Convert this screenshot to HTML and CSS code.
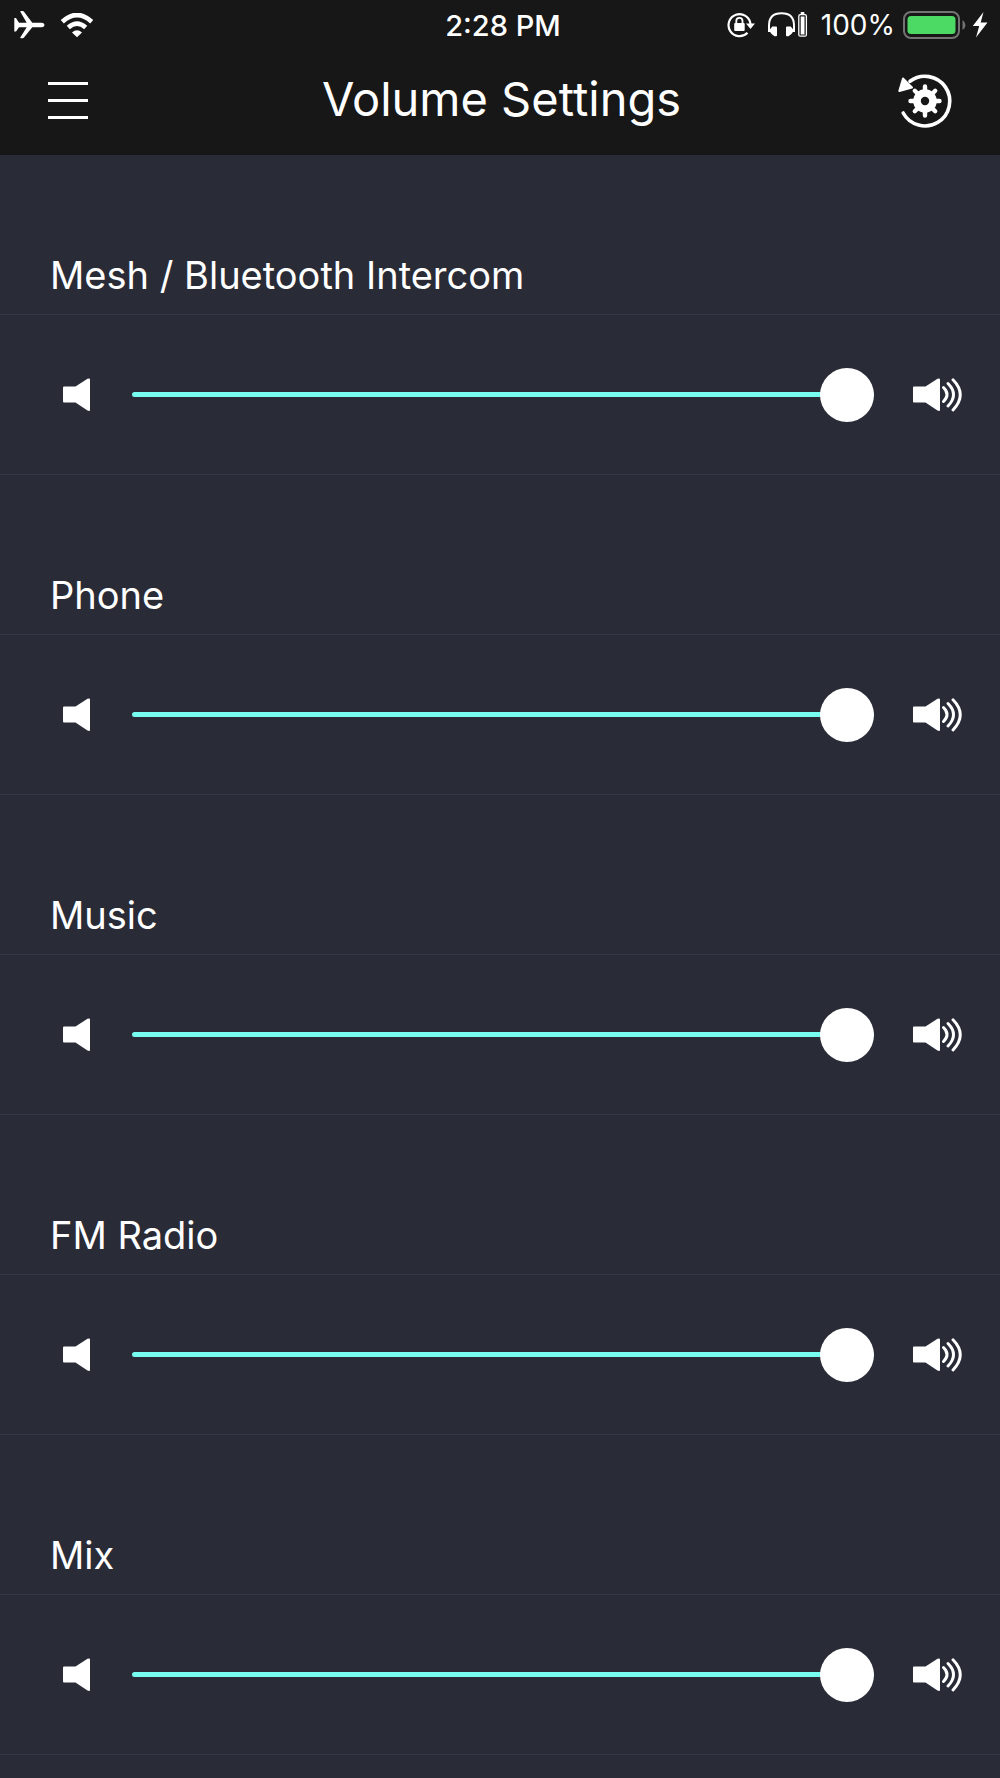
FILE: index.html
```html
<!DOCTYPE html>
<html lang="en">
<head>
    <meta charset="UTF-8">
    <meta name="viewport" content="width=device-width, initial-scale=1.0">
    <title>Volume Settings</title>
    <link rel="stylesheet" href="styles.css">
</head>
<body>

    <!-- shared speaker icons -->
    <svg class="sprite" aria-hidden="true">
        <symbol id="speaker-low" viewBox="0 0 30 34">
            <path d="M1 8.500H12.500L24.500 .8Q27 0 27 1.500V32Q27 33.500 24.500 32.500L12.500 24.500H1Q0 24.500 0 23.500V9.500Q0 8.500 1 8.500Z" fill="#fff"/>
        </symbol>
        <symbol id="speaker-high" viewBox="0 0 49 34">
            <path d="M1 8.500H12.500L24.500 .8Q27 0 27 1.500V32Q27 33.500 24.500 32.500L12.500 24.500H1Q0 24.500 0 23.500V9.500Q0 8.500 1 8.500Z" fill="#fff"/>
            <path d="M30.500 9.500Q37.500 16.500 30.500 23.500M35 5.500Q46 16.500 35 28M40 1.700Q54.500 16.500 40 32" fill="none" stroke="#fff" stroke-width="2.900" stroke-linecap="round"/>
        </symbol>
    </svg>

    <header class="header">
        <div class="status-bar">
            <div class="status-left">
                <svg width="32" height="28" viewBox="0 0 32 28" aria-label="Airplane mode">
                    <path d="M.3 7H2L5 11.700H12.700L6.300 .8Q6 0 7 0H8.700Q9.500 0 10 .7L18.300 11.700H28Q30.500 11.900 30.500 14T28 16.200H18.300L10 26.600Q9.500 27.200 8.700 27.200H7Q6 27.200 6.300 26.400L12.700 16.200H5L2 20.500H.3Z" fill="#fff"/>
                </svg>
                <svg width="34" height="25" viewBox="0 0 34 25" aria-label="Wi-Fi">
                    <path d="M2.300 8.700Q17-4.700 31.700 8.700M8.300 14.500Q17 6.700 25.700 14.500" fill="none" stroke="#fff" stroke-width="4.600"/>
                    <path d="M12 19.400Q17 15.200 22 19.400L17 24.300Z" fill="#fff"/>
                </svg>
            </div>
            <span class="time">2:28 PM</span>
            <div class="status-right">
                <svg width="28" height="26" viewBox="0 0 28 26" aria-label="Rotation lock">
                    <path d="M23.500 12A11 11 0 1 0 20.500 20.700" fill="none" stroke="#fff" stroke-width="2.200"/>
                    <path d="M19 11.500H28L23.500 17Z" fill="#fff"/>
                    <rect x="7.200" y="11" width="10.500" height="8" rx="1" fill="#fff"/>
                    <path d="M9.300 11.500V9Q9.300 5.800 12.400 5.800T15.500 9V11.500" fill="none" stroke="#fff" stroke-width="1.800"/>
                </svg>
                <svg class="headphones" width="40" height="26" viewBox="0 0 40 26" aria-label="Headphones battery">
                    <path d="M1 20V13.500Q1 1.200 13.500 1.200T26 13.500V20" fill="none" stroke="#fff" stroke-width="2"/>
                    <path d="M4.300 14.500H8Q9 14.500 9 15.500V23.300Q9 24.300 8 24.300H6.500Q3 22 1 18.500ZM22.700 14.500H19Q18 14.500 18 15.500V23.300Q18 24.300 19 24.300H20.500Q24 22 26 18.500Z" fill="#fff"/>
                    <rect x="30.800" y="2.700" width="7.600" height="21.500" rx="1.500" fill="none" stroke="#fff" stroke-width="1.300"/>
                    <rect x="32.700" y="4.500" width="3.800" height="18" fill="#fff"/>
                    <rect x="32.500" y="0" width="4" height="2" rx="1" fill="#fff"/>
                </svg>
                <span class="percent">100%</span>
                <svg width="64" height="28" viewBox="0 0 64 28" aria-label="Battery">
                    <rect x="1" y="1" width="55" height="26" rx="7" fill="none" stroke="#737373" stroke-width="2"/>
                    <rect x="4.500" y="5" width="48" height="18" rx="3.500" fill="#4cd964"/>
                    <path d="M59.500 9Q62.500 11 62.500 14T59.500 19Z" fill="#737373"/>
                </svg>
                <svg width="20" height="26" viewBox="0 0 20 26" aria-label="Charging">
                    <path d="M11.500 0L.8 14H7.200L4 25.500L15.500 10.500H8.700Z" fill="#fff"/>
                </svg>
            </div>
        </div>

        <div class="nav-bar">
            <button type="button" class="menu-button" aria-label="Menu">
                <span></span>
                <span></span>
                <span></span>
            </button>
            <h1>Volume Settings</h1>
            <button type="button" class="reset-button" aria-label="Reset settings">
                <svg width="60" height="60" viewBox="0 0 60 60">
                    <path d="M8.200 42A24.800 24.800 0 1 0 15 10.300" fill="none" stroke="#fff" stroke-width="3.600" stroke-linecap="round"/>
                    <path d="M4.300 20L8 7.500L17 16.500Z" fill="#fff" stroke="#fff" stroke-width="2" stroke-linejoin="round"/>
                    <circle cx="30" cy="30" r="8" fill="none" stroke="#fff" stroke-width="7.600"/>
                    <path d="M30 20V15.500M30 40V44.500M20 30H15.500M40 30H44.500M23 23L19.800 19.800M37 37L40.200 40.200M23 37L19.800 40.200M37 23L40.200 19.800" stroke="#fff" stroke-width="4.400" stroke-linecap="round"/>
                </svg>
            </button>
        </div>
    </header>

    <main>
        <section class="volume">
            <label for="intercom">Mesh / Bluetooth Intercom</label>
            <div class="slider-row">
                <svg width="30" height="34"><use href="#speaker-low"/></svg>
                <input type="range" id="intercom" min="0" max="10" value="10">
                <svg width="49" height="34"><use href="#speaker-high"/></svg>
            </div>
        </section>

        <section class="volume">
            <label for="phone">Phone</label>
            <div class="slider-row">
                <svg width="30" height="34"><use href="#speaker-low"/></svg>
                <input type="range" id="phone" min="0" max="10" value="10">
                <svg width="49" height="34"><use href="#speaker-high"/></svg>
            </div>
        </section>

        <section class="volume">
            <label for="music">Music</label>
            <div class="slider-row">
                <svg width="30" height="34"><use href="#speaker-low"/></svg>
                <input type="range" id="music" min="0" max="10" value="10">
                <svg width="49" height="34"><use href="#speaker-high"/></svg>
            </div>
        </section>

        <section class="volume">
            <label for="radio">FM Radio</label>
            <div class="slider-row">
                <svg width="30" height="34"><use href="#speaker-low"/></svg>
                <input type="range" id="radio" min="0" max="10" value="10">
                <svg width="49" height="34"><use href="#speaker-high"/></svg>
            </div>
        </section>

        <section class="volume">
            <label for="mix">Mix</label>
            <div class="slider-row">
                <svg width="30" height="34"><use href="#speaker-low"/></svg>
                <input type="range" id="mix" min="0" max="10" value="10">
                <svg width="49" height="34"><use href="#speaker-high"/></svg>
            </div>
        </section>
    </main>

</body>
</html>
```
FILE: styles.css
```css
*, *::before, *::after {
    box-sizing: border-box;
}

body {
    margin: 0;
    font-family: Inter, "Liberation Sans", sans-serif;
    background-color: #292b36;
    color: white;
}

svg {
    display: block;
    flex-shrink: 0;
}

.sprite {
    display: none;
}

button {
    padding: 0;
    border: none;
    background: none;
    cursor: pointer;
}

/* header */
.header {
    height: 155px;
    background-color: #171717;
}

.status-bar {
    display: grid;
    grid-template-columns: 1fr auto 1fr;
    align-items: center;
    height: 50px;
    padding: 0 8px 0 14px;
    font-size: 28px;
}

.status-left, .status-right {
    display: flex;
    align-items: center;
}

.status-left {
    gap: 14px;
}

.status-right {
    justify-content: flex-end;
}

.time {
    font-size: 29px;
    font-weight: 500;
}

.headphones {
    margin: 0 13px;
}

.percent {
    margin-right: 8px;
}

.status-right svg:last-child {
    margin-left: 5px;
}

.nav-bar {
    display: grid;
    grid-template-columns: 1fr auto 1fr;
    align-items: center;
    height: 101px;
    padding: 0 45px 0 48px;
}

.menu-button {
    display: flex;
    flex-direction: column;
    gap: 14px;
    width: 40px;
}

.menu-button span {
    width: 100%;
    height: 3px;
    background-color: white;
}

.reset-button {
    justify-self: end;
}

h1 {
    margin: 0;
    padding-bottom: 4px;
    font-size: 47px;
    font-weight: 400;
}

/* volume rows */
.volume label {
    display: flex;
    align-items: flex-end;
    height: 160px;
    padding: 0 50px 16px;
    border-bottom: 1px solid #343748;
    font-size: 38px;
}

.slider-row {
    display: flex;
    align-items: center;
    gap: 39px;
    height: 160px;
    padding: 0 38px 0 63px;
    border-bottom: 1px solid #343748;
}

input[type="range"] {
    -webkit-appearance: none;
    appearance: none;
    flex: 1;
    min-width: 0;
    height: 54px;
    margin: 0;
    background: none;
    cursor: pointer;
}

input[type="range"]::-webkit-slider-runnable-track {
    height: 5px;
    border-radius: 3px;
    background-color: #77fff0;
}

input[type="range"]::-webkit-slider-thumb {
    -webkit-appearance: none;
    width: 54px;
    height: 54px;
    margin-top: -24px;
    border-radius: 50%;
    background-color: white;
}
```
